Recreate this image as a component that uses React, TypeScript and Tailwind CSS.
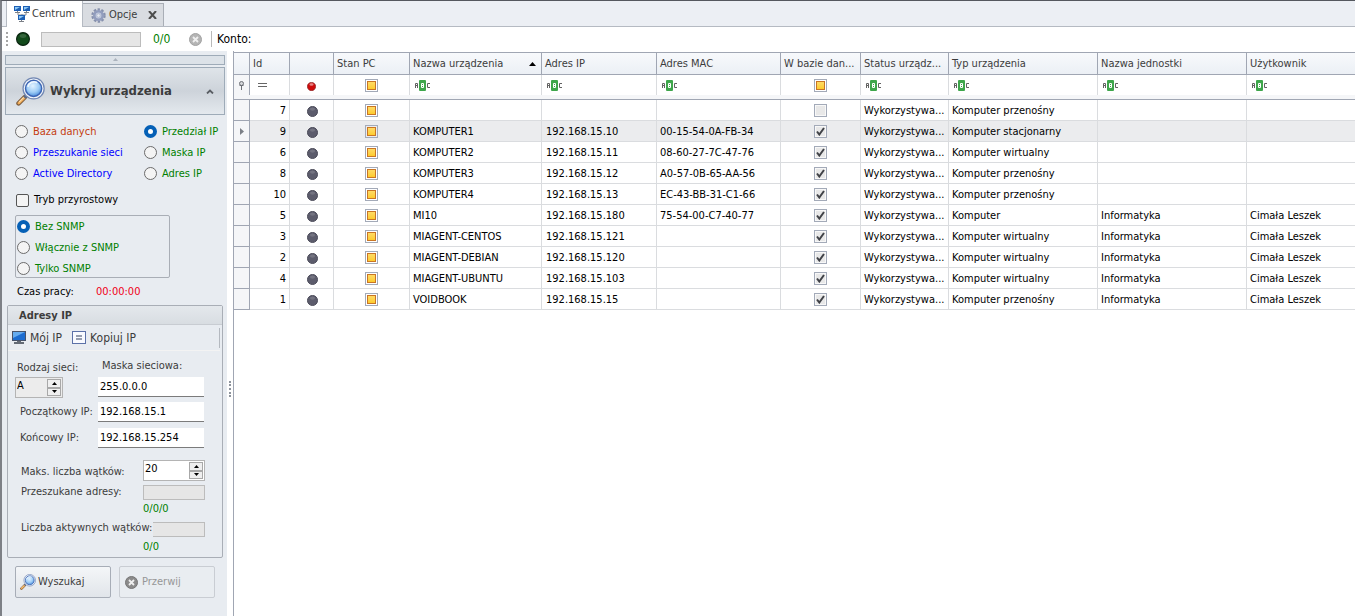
import React, { useState } from 'react';
import { clsx } from 'clsx';

interface Device {
  id: number;
  inDb: boolean;
  name?: string;
  ip?: string;
  mac?: string;
  type: string;
  unit?: string;
  user?: string;
}

const devices: Device[] = [
  { id: 7, inDb: false, type: 'Komputer przenośny' },
  { id: 9, inDb: true, name: 'KOMPUTER1', ip: '192.168.15.10', mac: '00-15-54-0A-FB-34', type: 'Komputer stacjonarny' },
  { id: 6, inDb: true, name: 'KOMPUTER2', ip: '192.168.15.11', mac: '08-60-27-7C-47-76', type: 'Komputer wirtualny' },
  { id: 8, inDb: true, name: 'KOMPUTER3', ip: '192.168.15.12', mac: 'A0-57-0B-65-AA-56', type: 'Komputer przenośny' },
  { id: 10, inDb: true, name: 'KOMPUTER4', ip: '192.168.15.13', mac: 'EC-43-BB-31-C1-66', type: 'Komputer przenośny' },
  { id: 5, inDb: true, name: 'MI10', ip: '192.168.15.180', mac: '75-54-00-C7-40-77', type: 'Komputer', unit: 'Informatyka', user: 'Cimała Leszek' },
  { id: 3, inDb: true, name: 'MIAGENT-CENTOS', ip: '192.168.15.121', type: 'Komputer wirtualny', unit: 'Informatyka', user: 'Cimała Leszek' },
  { id: 2, inDb: true, name: 'MIAGENT-DEBIAN', ip: '192.168.15.120', type: 'Komputer wirtualny', unit: 'Informatyka', user: 'Cimała Leszek' },
  { id: 4, inDb: true, name: 'MIAGENT-UBUNTU', ip: '192.168.15.103', type: 'Komputer wirtualny', unit: 'Informatyka', user: 'Cimała Leszek' },
  { id: 1, inDb: true, name: 'VOIDBOOK', ip: '192.168.15.15', type: 'Komputer przenośny', unit: 'Informatyka', user: 'Cimała Leszek' },
];

const columns = [
  { label: '', width: 'w-[16px]', filter: 'pin' },
  { label: 'Id', width: 'w-[40px]', filter: 'equals' },
  { label: '', width: 'w-[44px]', filter: 'led' },
  { label: 'Stan PC', width: 'w-[76px]', filter: 'check' },
  { label: 'Nazwa urządzenia', width: 'w-[132px]', filter: 'abc', sorted: true },
  { label: 'Adres IP', width: 'w-[115px]', filter: 'abc' },
  { label: 'Adres MAC', width: 'w-[124px]', filter: 'abc' },
  { label: 'W bazie dan...', width: 'w-[80px]', filter: 'check' },
  { label: 'Status urządz...', width: 'w-[88px]', filter: 'abc' },
  { label: 'Typ urządzenia', width: 'w-[149px]', filter: 'abc' },
  { label: 'Nazwa jednostki', width: 'w-[149px]', filter: 'abc' },
  { label: 'Użytkownik', width: '', filter: 'abc' },
];

function NetworkIcon() {
  return (
    <svg width="16" height="16" viewBox="0 0 16 16" className="shrink-0">
      <path d="M4 6v3h8V6M8 8v2" fill="none" stroke="#8a8f96" />
      {[[0, 0], [9, 0], [4, 9]].map(([x, y]) => (
        <g key={`${x}-${y}`} transform={`translate(${x} ${y})`}>
          <rect width="7" height="5" fill="#1d5fb4" />
          <path d="M1 1h5L1 4z" fill="#8cc8f5" />
          <path d="M3 5h1v1h2v1H1V6h2z" fill="#7b8087" />
        </g>
      ))}
    </svg>
  );
}

function GearIcon() {
  return (
    <svg width="15" height="15" viewBox="0 0 15 15" className="shrink-0">
      <circle cx="7.5" cy="7.5" r="6" fill="none" stroke="#8791ad" strokeWidth="2.4" strokeDasharray="2.4 1.4" />
      <circle cx="7.5" cy="7.5" r="4.2" fill="#c4cce0" stroke="#929dbd" strokeWidth="2.6" />
      <circle cx="7.5" cy="7.5" r="1.8" fill="#e4e8ef" stroke="#b3bbd0" />
    </svg>
  );
}

function Magnifier({ size }: { size: number }) {
  return (
    <svg width={size} height={size} viewBox="0 0 28 28" className="shrink-0">
      <defs>
        <radialGradient id="lens" cx="45%" cy="35%" r="65%">
          <stop offset="0" stopColor="#e2f2ff" />
          <stop offset="0.6" stopColor="#9fcdf6" />
          <stop offset="1" stopColor="#4c8fdc" />
        </radialGradient>
      </defs>
      <path d="M2.5 25.5 8.500 19.500" stroke="#7a5a3c" strokeWidth="4.4" strokeLinecap="round" />
      <path d="M2.7 25.2 8 20" stroke="#f0ac58" strokeWidth="2.6" strokeLinecap="round" />
      <path d="M3 24.200 7.500 19.700" stroke="#fbe0b4" strokeWidth="1" />
      <path d="m8 20 3-3" stroke="#5d6b85" strokeWidth="3" />
      <circle cx="17" cy="11" r="10.2" fill="#f3f6fa" stroke="#7389b4" strokeWidth="1.2" />
      <circle cx="17" cy="11" r="7.8" fill="url(#lens)" stroke="#3d65b4" strokeWidth="1.4" />
      <path d="M11.5 9.5a6 6 0 0 1 9-4" fill="none" stroke="#fff" strokeWidth="1.6" opacity="0.8" />
    </svg>
  );
}

function StopIcon({ dark }: { dark?: boolean }) {
  return (
    <svg width="13" height="13" viewBox="0 0 13 13" className="shrink-0">
      <circle cx="6.5" cy="6.5" r="6" fill={dark ? '#8b8b8b' : '#b4b4b4'} stroke={dark ? '#757575' : '#a2a2a2'} />
      <path d="m4 4 5 5m0-5L4 9" stroke="#efefef" strokeWidth="1.8" />
    </svg>
  );
}

function MonitorIcon() {
  return (
    <svg width="14" height="13" viewBox="0 0 14 13" className="shrink-0">
      <rect width="14" height="10" fill="#47536a" />
      <rect x="1" y="1" width="12" height="8" fill="#1c6cd0" />
      <path d="M1 1h12L1 7z" fill="#65acf0" />
      <path d="M5 10h4v1h3v2H2v-2h3z" fill="#646b75" />
    </svg>
  );
}

function Led({ color }: { color: 'green' | 'red' | 'gray' }) {
  const fill = { green: '#124a1b', red: '#cf0b0b', gray: '#5c5c6c' }[color];
  const edge = { green: '#0a2410', red: '#8e2a2a', gray: '#454553' }[color];
  const size = { green: 14, red: 9, gray: 11 }[color];
  return (
    <svg width={size} height={size} viewBox="0 0 12 12" className="inline-block shrink-0">
      <circle cx="6" cy="6" r="5.5" fill={fill} stroke={edge} />
      <ellipse cx="6" cy="3.4" rx="2.8" ry="1.7" fill="#fff" opacity={color === 'red' ? 0.5 : 0.15} />
    </svg>
  );
}

function AbcIcon() {
  return (
    <svg width="16" height="11" viewBox="0 0 16 11" className="block">
      <path d="M.5 8V3.500h2V8M.5 5.500h2" fill="none" stroke="#626262" />
      <rect x="4" width="7" height="11" rx="1" fill="#3ea64b" />
      <path d="M6.500 3.500h2v4h-2zM6.500 5.500h2" fill="none" stroke="#fff" />
      <path d="M15 3.500h-2.500v4H15" fill="none" stroke="#626262" />
    </svg>
  );
}

function TriState({ label }: { label: string }) {
  return (
    <input
      type="checkbox"
      aria-label={label}
      className="block mx-auto size-[13px] appearance-none border border-[#a3aab8] p-px bg-clip-content bg-linear-to-b from-[#ffdf70] to-[#fdc800] outline outline-1 -outline-offset-3 outline-[#c97524]"
    />
  );
}

function DbCheck({ checked, label }: { checked: boolean; label: string }) {
  return (
    <span className="grid place-items-center">
      <input
        type="checkbox"
        defaultChecked={checked}
        aria-label={label}
        className="peer col-start-1 row-start-1 size-[13px] appearance-none border border-[#a3aab8] bg-[#e8e8e8] outline outline-1 -outline-offset-2 outline-[#f8f8f8]"
      />
      <svg width="9" height="9" viewBox="0 0 9 9" className="pointer-events-none invisible col-start-1 row-start-1 peer-checked:visible">
        <path d="M1 4.500 3.300 7.500 8 1" fill="none" stroke="#404247" strokeWidth="2" />
      </svg>
    </span>
  );
}

interface RadioProps {
  name: string;
  label: string;
  color: string;
  checked?: boolean;
}

function Radio({ name, label, color, checked }: RadioProps) {
  return (
    <label className={clsx('flex h-[21px] items-center gap-[5px] whitespace-nowrap', color)}>
      <input
        type="radio"
        name={name}
        defaultChecked={checked}
        className="size-[13px] shrink-0 appearance-none rounded-full border border-[#6b6b6b] bg-[#f4f4f4] checked:border-4 checked:border-[#0560b6] checked:bg-white"
      />
      {label}
    </label>
  );
}

function Spinner({ id, value, className }: { id: string; value: string; className: string }) {
  const [current, setCurrent] = useState(value);
  return (
    <div className={clsx('flex h-[21px] border border-[#b4b4b4] p-px', className)}>
      <input
        id={id}
        value={current}
        onChange={(e) => setCurrent(e.target.value)}
        className="w-0 min-w-0 flex-1 bg-transparent pb-1 text-black outline-none"
      />
      <div className="flex w-[14px] flex-col">
        {['Zwiększ', 'Zmniejsz'].map((title, i) => (
          <button
            key={title}
            type="button"
            aria-label={title}
            className="flex flex-1 items-center justify-center border border-[#a8a8a8] bg-[#efefef]"
          >
            <svg width="5" height="3" viewBox="0 0 5 3">
              <path d={i === 0 ? 'M0 3 2.500 0 5 3z' : 'M0 0h5L2.500 3z'} />
            </svg>
          </button>
        ))}
      </div>
    </div>
  );
}

function AddressRow({ id, label, value }: { id: string; label: string; value: string }) {
  return (
    <div className="flex h-5 items-center">
      <label htmlFor={id} className="w-[78px] shrink-0 whitespace-nowrap">{label}</label>
      <input id={id} defaultValue={value} className="h-5 w-[106px] border-b border-[#7b7b7b] bg-white px-0.5 text-black outline-none" />
    </div>
  );
}

function FilterCell({ kind, label }: { kind: string; label: string }) {
  switch (kind) {
    case 'pin':
      return (
        <svg width="7" height="9" viewBox="0 0 7 9" className="mx-auto block">
          <circle cx="3.500" cy="2.500" r="2" fill="#d5d7da" stroke="#6d7076" />
          <path d="M1.500 4.500h4M3.500 5v4" stroke="#6d7076" />
        </svg>
      );
    case 'equals':
      return (
        <svg width="9" height="4" viewBox="0 0 9 4" className="ml-[5px] block">
          <path d="M0 .5h9M0 3.500h9" stroke="#666" />
        </svg>
      );
    case 'led':
      return <div className="flex justify-center pt-0.5"><Led color="red" /></div>;
    case 'check':
      return <TriState label={`Filtr: ${label}`} />;
    default:
      return <div className="pl-0.5"><AbcIcon /></div>;
  }
}

function DeviceTable() {
  const cell = 'border-r border-b border-[#dadcdf] px-[3px] last:border-r-0';
  const textCell = clsx(cell, 'truncate pt-0.5');
  return (
    <table className="w-full table-fixed border-separate border-spacing-0 text-left">
      <colgroup>
        {columns.map((c, i) => <col key={i} className={c.width} />)}
      </colgroup>
      <thead>
        <tr className="h-[23px] bg-linear-to-b from-[#f8fafc] to-[#ebeff5]">
          {columns.map((c, i) => (
            <th key={i} className="border-y border-r border-[#a0a6b3] px-[3px] font-normal whitespace-nowrap text-[#3c3c3c] last:border-r-0">
              <div className="flex items-center justify-between">
                <span>{c.label}</span>
                {c.sorted && (
                  <svg width="7" height="4" viewBox="0 0 7 4" className="mr-0.5 shrink-0"><path d="M0 4 3.500 0 7 4z" /></svg>
                )}
              </div>
            </th>
          ))}
        </tr>
        <tr className="h-5">
          {columns.map((c, i) => (
            <td key={i} className={clsx('border-r px-[3px] last:border-r-0', i === 0 ? 'border-[#a0a6b3] bg-[#f5f6f8]' : 'border-[#dadcdf]')}>
              <FilterCell kind={c.filter} label={c.label} />
            </td>
          ))}
        </tr>
        <tr className="h-[5px]">
          <td colSpan={columns.length} className="border-b border-[#a0a6b3] bg-[#f5f6f8]" />
        </tr>
      </thead>
      <tbody className="text-black">
        {devices.map((d) => (
          <tr key={d.id} className={clsx('h-[21px]', d.id === 9 && 'bg-[#ebecee]')}>
            <td className="border-r border-b border-[#a0a6b3] bg-[#f5f6f8]">
              {d.id === 9 && (
                <svg width="4" height="7" viewBox="0 0 4 7" className="mx-auto block"><path d="M0 0 4 3.500 0 7z" fill="#7c8087" /></svg>
              )}
            </td>
            <td className={clsx(textCell, 'text-right')}>{d.id}</td>
            <td className={cell}><div className="flex justify-center pt-0.5 pl-0.5"><Led color="gray" /></div></td>
            <td className={cell}><TriState label={`Stan PC ${d.id}`} /></td>
            <td className={textCell}>{d.name}</td>
            <td className={clsx(textCell, 'pl-1')}>{d.ip}</td>
            <td className={textCell}>{d.mac}</td>
            <td className={cell}><DbCheck checked={d.inDb} label={`W bazie danych ${d.id}`} /></td>
            <td className={textCell}>Wykorzystywa...</td>
            <td className={textCell}>{d.type}</td>
            <td className={textCell}>{d.unit}</td>
            <td className={textCell}>{d.user}</td>
          </tr>
        ))}
      </tbody>
    </table>
  );
}

function AddressPanel() {
  return (
    <section className="mx-0.5 mt-[3px] flex flex-col rounded-xs border border-[#a9aeb6] pb-0.5">
      <h2 className="h-[19px] border-b border-[#c8ccd2] bg-linear-to-b from-[#e4e8ec] to-[#d8dde2] pl-[11px] text-[11px] leading-[19px] font-bold">Adresy IP</h2>
      <div className="mr-0.5 flex h-[26px] items-center border-b border-[#f3f3f3] pl-1 text-[12px]">
        <button type="button" className="flex items-center gap-1"><MonitorIcon />Mój IP</button>
        <button type="button" className="ml-2.5 flex items-center gap-1">
          <svg width="14" height="13" viewBox="0 0 14 13">
            <rect x=".5" y=".5" width="13" height="12" fill="#f8faff" stroke="#5b71a8" />
            <path d="M4 5h6M4 8h6" stroke="#33415f" />
          </svg>
          Kopiuj IP
        </button>
        <div className="ml-auto h-5 border-r border-[#b4b9c0]" />
      </div>
      <div className="mt-[7px] flex px-[7px]">
        <div className="w-[83px]">
          <label htmlFor="net-class" className="mb-px block h-[18px] pt-0.5 pl-0.5 leading-4">Rodzaj sieci:</label>
          <Spinner id="net-class" value="A" className="w-[48px] bg-[#ececec]" />
        </div>
        <div>
          <label htmlFor="net-mask" className="mb-px block h-[18px] pl-1 leading-4">Maska sieciowa:</label>
          <input id="net-mask" defaultValue="255.0.0.0" className="block h-5 w-[106px] border-b border-[#7b7b7b] bg-white px-0.5 text-black outline-none" />
        </div>
      </div>
      <div className="mt-1 flex flex-col gap-1.5 pl-3">
        <AddressRow id="ip-from" label="Początkowy IP:" value="192.168.15.1" />
        <AddressRow id="ip-to" label="Końcowy IP:" value="192.168.15.254" />
      </div>
      <div className="mt-3 grid grid-cols-[122px_62px] pl-[13px]">
        <label htmlFor="threads" className="pt-1 leading-4 whitespace-nowrap">Maks. liczba wątków:</label>
        <Spinner id="threads" value="20" className="bg-white" />
        <span className="pt-[3px] leading-4 whitespace-nowrap">Przeszukane adresy:</span>
        <div className="mt-1 h-[15px] border border-[#bcbcbc] bg-[#e6e6e6]" />
        <span className="col-start-2 h-[18px] pt-px leading-4 text-[#008000]">0/0/0</span>
        <span className="z-10 col-start-1 w-[132px] bg-[#e8ecf1] pt-0.5 leading-4 whitespace-nowrap">Liczba aktywnych wątków:</span>
        <div className="mt-1 h-[15px] border border-[#bcbcbc] bg-[#e6e6e6]" />
        <span className="col-start-2 h-[18px] pt-0.5 leading-4 text-[#008000]">0/0</span>
      </div>
    </section>
  );
}

function Sidebar() {
  return (
    <aside className="w-[225px] shrink-0 bg-[#e8ecf1] pt-1 pr-0.5 pb-4 pl-[3px] text-[#3c3c3c]">
      <button type="button" aria-label="Zwiń" className="flex h-2.5 w-full items-center justify-center border border-[#9eabb8] bg-[#dce2e8] pb-px">
        <svg width="5" height="3" viewBox="0 0 5 3"><path d="M0 3 2.500 0 5 3z" fill="#abb3bd" /></svg>
      </button>
      <button type="button" className="mt-0.5 flex h-12 w-full items-center border border-[#9eabb8] bg-linear-to-b from-[#dfe4e9] via-[#cdd3da] to-[#e4e9ee] px-2.5 text-left text-[13px] font-bold">
        <Magnifier size={29} />
        <span className="ml-[5px] flex-1">Wykryj urządzenia</span>
        <svg width="8" height="5" viewBox="0 0 8 5"><path d="m1 4.500 3-3 3 3" fill="none" stroke="#5a5e64" strokeWidth="1.800" /></svg>
      </button>
      <div className="mt-1.5 flex pl-2.5">
        <div className="w-[129px]">
          <Radio name="source" label="Baza danych" color="text-[#c43c10]" />
          <Radio name="source" label="Przeszukanie sieci" color="text-[#0000ff]" />
          <Radio name="source" label="Active Directory" color="text-[#0000ff]" />
        </div>
        <div>
          <Radio name="source" label="Przedział IP" color="text-[#008000]" checked />
          <Radio name="source" label="Maska IP" color="text-[#008000]" />
          <Radio name="source" label="Adres IP" color="text-[#008000]" />
        </div>
      </div>
      <label className="mt-1.5 ml-[11px] flex h-5 items-center gap-[5px] text-black">
        <input type="checkbox" className="size-[13px] appearance-none rounded-xs border border-[#555] bg-[#f4f4f4]" />
        Tryb przyrostowy
      </label>
      <fieldset className="mt-[5px] ml-2.5 h-[63px] w-[155px] rounded-xs border border-[#a9aeb6] pl-px">
        <Radio name="snmp" label="Bez SNMP" color="text-[#008000]" checked />
        <Radio name="snmp" label="Włącznie z SNMP" color="text-[#008000]" />
        <Radio name="snmp" label="Tylko SNMP" color="text-[#008000]" />
      </fieldset>
      <div className="mt-1 flex h-5 items-center pl-3 text-black">
        <span className="w-[79px]">Czas pracy:</span>
        <span className="text-[#f00018]">00:00:00</span>
      </div>
      <AddressPanel />
      <div className="mt-2 flex gap-2 pl-2.5">
        <button type="button" className="flex h-8 w-24 items-center gap-0.5 rounded-xs border border-[#a7adb7] bg-linear-to-b from-[#f4f6f8] to-[#e1e5ea] pl-1">
          <Magnifier size={16} />Wyszukaj
        </button>
        <button type="button" disabled className="flex h-8 w-24 items-center gap-1 rounded-xs border border-[#c9cdd3] bg-[#e9edf1] pl-[5px] text-[#969696]">
          <StopIcon dark />Przerwij
        </button>
      </div>
    </aside>
  );
}

export default function App() {
  return (
    <div className="flex min-h-screen flex-col border-t border-l-2 border-t-[#55585e] border-l-[#7d8086] bg-white font-['DejaVu_Sans_Condensed','Noto_Sans',sans-serif] text-[11px] leading-4 text-[#3c3c3c]">
      <nav className="flex h-[26px] items-end border-b border-[#b5bac2] bg-[#eceff4] pl-1">
        <button type="button" className="-mb-px flex h-[26px] w-[77px] items-center gap-0.5 border-x border-[#b5bac2] bg-white pl-[7px]">
          <NetworkIcon />Centrum
        </button>
        <button type="button" className="flex h-[23px] w-[81px] items-center gap-[3px] border-t border-r border-[#a9aeb6] bg-[#d9dce1] pl-2">
          <GearIcon />Opcje
          <svg width="9" height="8" viewBox="0 0 9 8" className="ml-2"><path d="m1 0 7 8m0-8L1 8" stroke="#4d4d4d" strokeWidth="2" /></svg>
        </button>
      </nav>
      <div className="flex h-6 items-center pl-1 text-[12px] text-black">
        <div className="h-[14px] w-0 border-l-2 border-dotted border-[#a5a5a5]" />
        <div className="ml-2 flex"><Led color="green" /></div>
        <div className="ml-[11px] h-[15px] w-[100px] border border-[#bcbcbc] bg-[#e6e6e6]" />
        <span className="ml-3 w-[36px] text-[#008000]">0/0</span>
        <button type="button" aria-label="Zatrzymaj"><StopIcon /></button>
        <div className="ml-[9px] h-4 border-l border-[#b9b9b9]" />
        <span className="ml-[5px]">Konto:</span>
      </div>
      <div className="flex flex-1">
        <Sidebar />
        <div className="flex w-[6px] shrink-0 flex-col items-center justify-center bg-white">
          <div className="mt-[110px] h-4 border-l-2 border-dotted border-[#8d939c]" />
        </div>
        <main className="min-w-0 flex-1 border-l border-[#a0a6b3] bg-white pt-px">
          <DeviceTable />
        </main>
      </div>
    </div>
  );
}
